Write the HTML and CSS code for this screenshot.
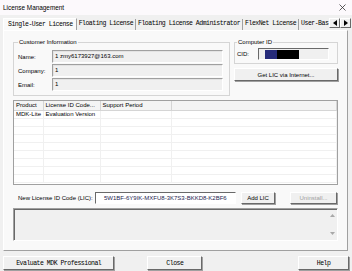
FILE: index.html
```html
<!DOCTYPE html>
<html lang="en">
<head>
    <meta charset="UTF-8">
    <title>License Management</title>
    <link rel="stylesheet" href="styles.css">
</head>
<body>
    <div class="titlebar">
        <span class="title">License Management</span>
        <svg class="close" width="7" height="7" viewBox="0 0 7 7">
            <path d="M0.5 0.5 L6.5 6.5 M6.5 0.5 L0.5 6.5" stroke="#333" stroke-width="0.8" fill="none"/>
        </svg>
    </div>

    <div class="tabs">
        <div class="tab-strip">
            <div class="tab active">Single-User License</div>
            <div class="tab">Floating License</div>
            <div class="tab">Floating License Administrator</div>
            <div class="tab">FlexNet License</div>
            <div class="tab last">User-Bas</div>
        </div>
        <div class="tab-arrows">
            <span class="arrow">
                <svg width="4" height="6" viewBox="0 0 4 6"><polygon points="4,0 4,6 0,3" fill="#000"/></svg>
            </span>
            <span class="arrow">
                <svg width="4" height="6" viewBox="0 0 4 6"><polygon points="0,0 0,6 4,3" fill="#000"/></svg>
            </span>
        </div>
    </div>

    <div class="panel">
        <div class="top-row">
            <fieldset class="group customer">
                <legend>Customer Information</legend>
                <div class="field-row">
                    <label>Name:</label>
                    <div class="readonly">1 zmy6173927@163.com</div>
                </div>
                <div class="field-row">
                    <label>Company:</label>
                    <div class="readonly">1</div>
                </div>
                <div class="field-row">
                    <label>Email:</label>
                    <div class="readonly">1</div>
                </div>
            </fieldset>

            <div class="right-col">
                <fieldset class="group computer">
                    <legend>Computer ID</legend>
                    <div class="cid-row">
                        <label>CID:</label>
                        <div class="cid-box">
                            <span class="cid-blue"></span>
                            <span class="cid-black"></span>
                        </div>
                    </div>
                </fieldset>
                <button class="btn get-lic">Get LIC via Internet...</button>
            </div>
        </div>

        <div class="list">
            <table>
                <tr class="head">
                    <th class="col-product">Product</th>
                    <th class="col-code">License ID Code...</th>
                    <th class="col-period">Support Period</th>
                    <th></th>
                </tr>
                <tr>
                    <td>MDK-Lite</td>
                    <td>Evaluation Version</td>
                    <td></td>
                    <td></td>
                </tr>
                <tr><td></td><td></td><td></td><td></td></tr>
                <tr><td></td><td></td><td></td><td></td></tr>
                <tr><td></td><td></td><td></td><td></td></tr>
                <tr><td></td><td></td><td></td><td></td></tr>
                <tr><td></td><td></td><td></td><td></td></tr>
                <tr><td></td><td></td><td></td><td></td></tr>
                <tr><td></td><td></td><td></td><td></td></tr>
                <tr><td></td><td></td><td></td><td></td></tr>
            </table>
        </div>

        <div class="lic-row">
            <label>New License ID Code (LIC):</label>
            <div class="lic-input">5W1BF-6Y9IK-MXFU8-3K7S3-BKKD8-K2BF6</div>
            <button class="btn add-lic">Add LIC</button>
            <button class="btn uninstall" disabled>Uninstall...</button>
        </div>

        <div class="log">
            <div class="scroll">
                <svg width="5" height="3" viewBox="0 0 5 3"><polygon points="0,3 5,3 2.5,0" fill="#a8a8a8"/></svg>
                <svg width="5" height="3" viewBox="0 0 5 3"><polygon points="0,0 5,0 2.5,3" fill="#a8a8a8"/></svg>
            </div>
        </div>
    </div>

    <div class="bottom-buttons">
        <button class="btn sys evaluate">Evaluate MDK Professional</button>
        <button class="btn sys close-btn">Close</button>
        <button class="btn sys help">Help</button>
    </div>
</body>
</html>
```

FILE: styles.css
```css
* {
    box-sizing: border-box;
}

body {
    margin: 0;
    width: 352px;
    height: 271px;
    overflow: hidden;
    background-color: #f0f0f0;
    font-family: "Liberation Sans", Arial, sans-serif;
    font-size: 6px;
    color: #000;
}

.titlebar {
    height: 15px;
    display: flex;
    align-items: center;
    justify-content: space-between;
    padding: 0 6px 0 3px;
    background-color: #fcf9fc;
    font-size: 6.4px;
}

/* tab header */
.tabs {
    display: flex;
    align-items: flex-end;
    height: 15px;
    padding-left: 3px;
}

.tab-strip {
    display: flex;
    align-items: flex-end;
    width: 326px;
    overflow: hidden;
}

.tab {
    font-family: "Liberation Mono", monospace;
    font-size: 6.5px;
    letter-spacing: -0.5px;
    line-height: 10px;
    height: 11px;
    padding: 0 2px;
    border-right: 1px solid #a0a0a0;
    white-space: nowrap;
}

.tab.last {
    padding-right: 0;
    border-right: none;
}

.tab.active {
    height: 13px;
    line-height: 12px;
    margin-bottom: -1px;
    padding: 0 3px 0 4px;
    background-color: #f9f9f9;
    border: 1px solid #fff;
    border-right-color: #a0a0a0;
    border-bottom: none;
    position: relative;
    z-index: 1;
}

.tab-arrows {
    display: flex;
    margin-bottom: 2px;
}

.arrow {
    width: 11px;
    height: 10px;
    display: flex;
    align-items: center;
    justify-content: center;
    background-color: #f0f0f0;
    border: 1px solid;
    border-color: #fff #696969 #696969 #fff;
}

/* tab page */
.panel {
    margin: 0 4px 0 3px;
    height: 221px;
    padding: 8px 9px 9px 9px;
    background-color: #f9f9f9;
    border: 1px solid;
    border-color: #fff #a0a0a0 #a0a0a0 #fff;
}

.top-row {
    display: flex;
    gap: 4px;
}

.group {
    margin: 0;
    padding: 4px 4px 3px 4px;
    border: 1px solid #d5d5d5;
}

.group legend {
    padding: 0 1px;
    line-height: 7px;
}

.customer {
    width: 218px;
    height: 57px;
    display: flex;
    flex-direction: column;
    gap: 1px;
}

.field-row {
    display: flex;
    align-items: center;
    height: 13px;
}

.field-row label {
    width: 34px;
}

.readonly {
    width: 171px;
    height: 13px;
    padding: 0 2px;
    line-height: 11px;
    background-color: #f0f0f0;
    border: 1px solid;
    border-color: #a0a0a0 #fff #fff #a0a0a0;
    box-shadow: inset 1px 1px 0 #e3e3e3;
}

.right-col {
    width: 104px;
    display: flex;
    flex-direction: column;
    gap: 4px;
}

.computer {
    height: 25px;
    padding: 2px 4px 2px 2px;
}

.cid-row {
    display: flex;
    align-items: center;
}

.cid-row label {
    width: 21px;
}

.cid-box {
    display: flex;
    width: 71px;
    height: 12px;
    padding: 1px 0 0 6px;
    background-color: #f0f0f0;
    border: 1px solid;
    border-color: #696969 #fff #fff #696969;
}

.cid-blue {
    width: 12px;
    background-color: #262b7a;
}

.cid-black {
    width: 22px;
    background-color: #000;
}

.btn {
    font-family: "Liberation Sans", Arial, sans-serif;
    font-size: 6px;
    color: #000;
    padding: 0;
    background-color: #f0f0f0;
    border: 1px solid;
    border-color: #fff #696969 #696969 #fff;
    box-shadow: 1px 1px 0 #a0a0a0;
}

.get-lic {
    width: 104px;
    height: 13px;
}

/* list view */
.list {
    margin-top: 4px;
    height: 85px;
    background-color: #fff;
    border: 1px solid #a0a0a0;
    overflow: hidden;
}

.list table {
    width: 100%;
    border-collapse: collapse;
    table-layout: fixed;
}

.list th {
    height: 9px;
    padding: 0 2px;
    font-weight: normal;
    text-align: left;
    line-height: 8px;
    background-color: #f4f4f4;
    border-right: 1px solid #d5d5d5;
    border-bottom: 1px solid #d5d5d5;
    white-space: nowrap;
    overflow: hidden;
}

.list td {
    height: 8px;
    padding: 0 2px;
    line-height: 7px;
    border-right: 1px solid #f0f0f0;
    border-bottom: 1px solid #f0f0f0;
    white-space: nowrap;
}

.col-product {
    width: 29px;
}

.col-code {
    width: 57px;
}

.col-period {
    width: 71px;
}

/* new license row */
.lic-row {
    display: flex;
    align-items: center;
    margin-top: 6px;
    height: 13px;
}

.lic-row label {
    width: 82px;
    padding-left: 5px;
}

.lic-input {
    width: 141px;
    height: 12px;
    padding-left: 8px;
    line-height: 10px;
    color: #1c1c50;
    background-color: #fff;
    border: 1px solid;
    border-color: #696969 #fff #fff #696969;
}

.add-lic {
    width: 34px;
    height: 12px;
    margin-left: 5px;
}

.uninstall {
    width: 47px;
    height: 12px;
    margin-left: 15px;
    color: #a0a0a0;
}

/* output box */
.log {
    margin-top: 4px;
    height: 33px;
    display: flex;
    justify-content: flex-end;
    background-color: #f0f0f0;
    border: 1px solid;
    border-color: #a0a0a0 #fff #fff #a0a0a0;
    box-shadow: inset 1px 1px 0 #696969;
}

.scroll {
    width: 9px;
    display: flex;
    flex-direction: column;
    align-items: center;
    justify-content: space-between;
    padding: 5px 0 5px;
}

/* dialog buttons */
.bottom-buttons {
    display: flex;
    padding: 5px 3px 0 3px;
}

.btn.sys {
    height: 14px;
    font-family: "Liberation Mono", monospace;
    font-size: 6.5px;
    letter-spacing: -0.5px;
}

.evaluate {
    width: 112px;
}

.close-btn {
    width: 55px;
    margin-left: 33px;
}

.help {
    width: 51px;
    margin-left: 96px;
}
```
